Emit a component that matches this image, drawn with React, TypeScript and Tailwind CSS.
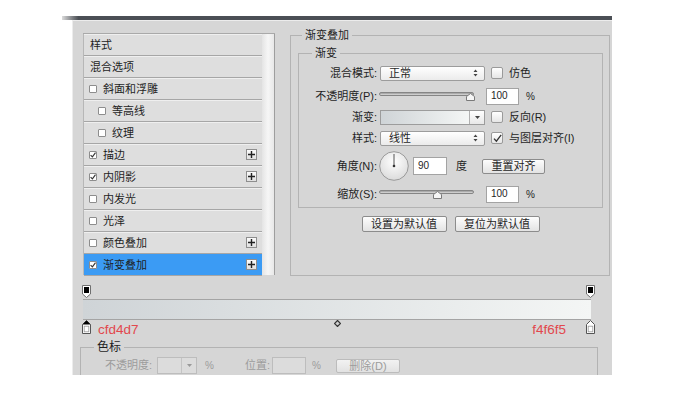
import React from "react";

type Row = {
  label: string;
  cb: boolean | null;
  indent?: boolean;
  plus?: boolean;
  selected?: boolean;
};

const rows: Row[] = [
  { label: "样式", cb: null },
  { label: "混合选项", cb: null },
  { label: "斜面和浮雕", cb: false },
  { label: "等高线", cb: false, indent: true },
  { label: "纹理", cb: false, indent: true },
  { label: "描边", cb: true, plus: true },
  { label: "内阴影", cb: true, plus: true },
  { label: "内发光", cb: false },
  { label: "光泽", cb: false },
  { label: "颜色叠加", cb: false, plus: true },
  { label: "渐变叠加", cb: true, plus: true, selected: true },
];

function SmallCheck({ checked }: { checked: boolean }) {
  return (
    <span className="flex h-[8px] w-[8px] shrink-0 items-center justify-center rounded-[1px] border border-[#8d8d8d] bg-white">
      {checked && (
        <svg width="6" height="6" viewBox="0 0 6 6">
          <path d="M0.6 3.1 L2.4 4.9 L5.5 0.7" fill="none" stroke="#333" strokeWidth="1.1" />
        </svg>
      )}
    </span>
  );
}

function Plus() {
  return (
    <span className="flex h-[11px] w-[11px] items-center justify-center border border-[#8e8e8e] bg-gradient-to-b from-[#fbfbfb] to-[#e0e0e0]">
      <svg width="7" height="7" viewBox="0 0 7 7">
        <path d="M3.5 0 V7 M0 3.5 H7" stroke="#222" strokeWidth="1.4" />
      </svg>
    </span>
  );
}

function Check({ checked, cls }: { checked: boolean; cls: string }) {
  return (
    <span
      className={
        "flex h-[12px] w-[12px] shrink-0 items-center justify-center rounded-[2px] border border-[#9a9a9a] bg-gradient-to-b from-white to-[#e6e6e6] " +
        cls
      }
    >
      {checked && (
        <svg width="9" height="9" viewBox="0 0 9 9">
          <path d="M1 4.6 L3.4 7.2 L8.2 0.8" fill="none" stroke="#333" strokeWidth="1.3" />
        </svg>
      )}
    </span>
  );
}

function UpDown() {
  return (
    <svg width="5" height="8" viewBox="0 0 5 8">
      <path d="M2.5 0.5 L4.5 3 H0.5 Z M2.5 7.5 L4.5 5 H0.5 Z" fill="#444" />
    </svg>
  );
}

function Select({ text }: { text: string }) {
  return (
    <div className="ml-[3px] flex h-[15px] w-[105px] items-center justify-between rounded-[2px] border border-[#9c9c9c] bg-gradient-to-b from-white to-[#ebebeb] pl-[8px] pr-[6px]">
      <span className="leading-[13px]">{text}</span>
      <UpDown />
    </div>
  );
}

function Slider({ pos }: { pos: number }) {
  return (
    <div className="relative ml-[2px] h-[9px] w-[95px]">
      <div className="h-[4px] w-full rounded-full border border-[#858585] bg-gradient-to-b from-[#9a9a9a] to-[#dedede]" />
      <svg className="absolute top-[1px]" style={{ left: pos - 4.5 }} width="9" height="8" viewBox="0 0 9 8">
        <path d="M0.5 7.5 V3.5 L4.5 0.5 L8.5 3.5 V7.5 Z" fill="#f6f6f6" stroke="#7a7a7a" />
      </svg>
    </div>
  );
}

function NumBox({ value, cls }: { value: string; cls: string }) {
  return (
    <div
      className={
        "flex items-center border border-[#a3a3a3] bg-white pl-[4px] text-[10px] leading-[12px] " + cls
      }
    >
      {value}
    </div>
  );
}

function Button({ text, cls }: { text: string; cls: string }) {
  return (
    <div
      className={
        "flex items-center justify-center rounded-[2px] border border-[#8c8c8c] bg-gradient-to-b from-[#fdfdfd] to-[#e3e3e3] leading-[12px] " +
        cls
      }
    >
      {text}
    </div>
  );
}

function TopStop() {
  return (
    <svg width="9" height="13" viewBox="0 0 9 13">
      <path d="M0.5 0.5 H8.5 V9 L4.5 12.5 L0.5 9 Z" fill="#fff" stroke="#6f6f6f" />
      <rect x="2" y="2" width="5" height="6" fill="#000" />
    </svg>
  );
}

function BottomStop({ active }: { active: boolean }) {
  return (
    <svg width="9" height="14" viewBox="0 0 9 14">
      <path d="M4.5 0.5 L8.5 4.5 V13.5 H0.5 V4.5 Z" fill="#fff" stroke="#555" />
      {active && <path d="M4.5 0.5 L8.5 4.5 H0.5 Z" fill="#000" />}
      <rect x="2.2" y="6.2" width="4.6" height="5.6" fill="#fff" stroke="#9a9a9a" strokeWidth="0.8" />
    </svg>
  );
}

export default function App() {
  return (
    <div className="relative h-[396px] w-[690px] overflow-hidden bg-white text-[11px] text-[#1f1f1f] [font-family:'Liberation_Sans','Noto_Sans_CJK_SC',sans-serif]">
      <div className="ml-[62px] mt-[16px] h-[4px] w-[550px] bg-gradient-to-r from-[#dcdcdc] via-[#4b4f55] via-[3%] to-[#4b4f55]" />
      <div className="ml-[72px] flex h-[355px] w-[540px] flex-col overflow-hidden border-l border-t border-[#ececec] bg-[#d6d6d6]">
        {/* upper area */}
        <div className="flex shrink-0 items-start pl-[10px] pt-[7px]">
          {/* style list */}
          <div className="mt-[5px] flex h-[242px] w-[192px] border-t border-[#a9a9a9]">
            <div className="flex w-[179px] flex-col border-l border-[#b7b7b7]">
              {rows.map((r) => (
                <div
                  key={r.label}
                  className={
                    r.selected
                      ? "flex h-[22px] shrink-0 items-center border-b border-[#a6a6a6] bg-[#3b9bf4] pr-[5px]"
                      : "flex h-[22px] shrink-0 items-center border-b border-[#a6a6a6] bg-[#dedede] pr-[5px] shadow-[inset_0_1px_0_#efefef]"
                  }
                >
                  <div
                    className={
                      r.cb === null
                        ? "flex flex-1 items-center gap-[6px] pl-[6px]"
                        : r.indent
                          ? "flex flex-1 items-center gap-[6px] pl-[14px]"
                          : "flex flex-1 items-center gap-[6px] pl-[5px]"
                    }
                  >
                    {r.cb !== null && <SmallCheck checked={r.cb} />}
                    <span className="leading-[14px]">{r.label}</span>
                  </div>
                  {r.plus && <Plus />}
                </div>
              ))}
            </div>
            <div className="h-full w-[13px] border-r border-[#9e9e9e] bg-gradient-to-r from-[#e4e4e4] via-[#f6f6f6] to-[#e8e8e8]" />
          </div>

          {/* right panel */}
          <fieldset className="ml-[15px] h-[248px] w-[320px] border border-[#b3b3b3] p-0">
            <legend className="ml-[11px] px-[3px] leading-[14px]">渐变叠加</legend>
            <div className="flex flex-col pl-[7px] pr-[6px]">
              <fieldset className="mt-[4px] w-[305px] border border-[#b3b3b3] p-0">
                <legend className="ml-[13px] px-[3px] leading-[14px]">渐变</legend>
                <div className="flex flex-col pb-[4px]">
                  <div className="mt-[4px] flex h-[18px] items-center">
                    <span className="w-[78px] text-right">混合模式:</span>
                    <Select text="正常" />
                    <Check checked={false} cls="ml-[6px]" />
                    <span className="ml-[6px]">仿色</span>
                  </div>
                  <div className="mt-[5px] flex h-[18px] items-center">
                    <span className="w-[78px] text-right">不透明度(P):</span>
                    <Slider pos={91} />
                    <NumBox value="100" cls="ml-[12px] h-[17px] w-[33px]" />
                    <span className="ml-[7px] text-[10px]">%</span>
                  </div>
                  <div className="mt-[3px] flex h-[18px] items-center">
                    <span className="w-[78px] text-right">渐变:</span>
                    <div className="ml-[3px] flex h-[15px] w-[105px] border border-[#9c9c9c]">
                      <div className="flex-1 bg-gradient-to-r from-[#cfd4d7] to-[#f4f6f5]" />
                      <div className="flex w-[15px] items-center justify-center border-l border-[#b0b0b0] bg-gradient-to-b from-white to-[#e8e8e8]">
                        <svg width="5" height="3" viewBox="0 0 5 3">
                          <path d="M0 0 H5 L2.5 3 Z" fill="#444" />
                        </svg>
                      </div>
                    </div>
                    <Check checked={false} cls="ml-[6px]" />
                    <span className="ml-[6px]">反向(R)</span>
                  </div>
                  <div className="mt-[3px] flex h-[18px] items-center">
                    <span className="w-[78px] text-right">样式:</span>
                    <Select text="线性" />
                    <Check checked={true} cls="ml-[6px]" />
                    <span className="ml-[6px]">与图层对齐(I)</span>
                  </div>
                  <div className="mt-[4px] flex h-[30px] items-center">
                    <span className="w-[78px] text-right">角度(N):</span>
                    <svg className="ml-[2px]" width="30" height="30" viewBox="0 0 30 30">
                      <defs>
                        <radialGradient id="dialg" cx="50%" cy="35%" r="70%">
                          <stop offset="0%" stopColor="#ffffff" />
                          <stop offset="100%" stopColor="#d8d8d8" />
                        </radialGradient>
                      </defs>
                      <circle cx="15" cy="15" r="14.3" fill="url(#dialg)" stroke="#9a9a9a" />
                      <line x1="15" y1="15" x2="15" y2="3" stroke="#555" strokeWidth="1" />
                      <circle cx="15" cy="15" r="1.3" fill="#333" />
                    </svg>
                    <NumBox value="90" cls="ml-[4px] h-[18px] w-[34px]" />
                    <span className="ml-[9px]">度</span>
                    <Button text="重置对齐" cls="ml-[15px] h-[15px] w-[63px]" />
                  </div>
                  <div className="mt-[4px] flex h-[18px] items-center">
                    <span className="w-[78px] text-right">缩放(S):</span>
                    <Slider pos={58} />
                    <NumBox value="100" cls="ml-[12px] h-[17px] w-[33px]" />
                    <span className="ml-[7px] text-[10px]">%</span>
                  </div>
                </div>
              </fieldset>
              <div className="mt-[8px] flex justify-center gap-[8px]">
                <Button text="设置为默认值" cls="h-[16px] w-[85px]" />
                <Button text="复位为默认值" cls="h-[16px] w-[85px]" />
              </div>
            </div>
          </fieldset>
        </div>

        {/* gradient editor */}
        <div className="ml-[9px] mt-[9px] flex h-[13px] w-[513px] shrink-0 justify-between">
          <TopStop />
          <TopStop />
        </div>
        <div className="ml-[10px] mt-[1px] h-[21px] w-[508px] shrink-0 border-y border-[#a4a4a4] bg-gradient-to-r from-[#cfd4d7] to-[#f4f6f5]" />
        <div className="relative ml-[9px] flex h-[14px] w-[513px] shrink-0 items-start justify-between">
          <div className="flex items-start">
            <BottomStop active={true} />
            <span className="ml-[7px] mt-[2px] text-[13.5px] leading-[16px] text-[#e2484d]">cfd4d7</span>
          </div>
          <svg className="absolute left-[252px] top-[0px]" width="7" height="7" viewBox="0 0 7 7">
            <path d="M3.5 0.5 L6.5 3.5 L3.5 6.5 L0.5 3.5 Z" fill="#cfcfcf" stroke="#333" strokeWidth="1.2" />
          </svg>
          <div className="flex items-start">
            <span className="mr-[20px] mt-[2px] text-[13.5px] leading-[16px] text-[#e2484d]">f4f6f5</span>
            <BottomStop active={false} />
          </div>
        </div>

        <fieldset className="ml-[7px] mt-[6px] h-[60px] w-[518px] shrink-0 border border-[#b3b3b3] p-0">
          <legend className="ml-[13px] px-[3px] text-[12px] leading-[14px]">色标</legend>
          <div className="mt-[3px] flex h-[17px] items-center pl-[24px] text-[#9c9c9c]">
            <span>不透明度:</span>
            <div className="ml-[5px] flex h-[17px] w-[40px] border border-[#bdbdbd] bg-[#dcdcdc]">
              <div className="flex-1" />
              <div className="flex w-[15px] items-center justify-center border-l border-[#c4c4c4]">
                <svg width="5" height="3" viewBox="0 0 5 3">
                  <path d="M0 0 H5 L2.5 3 Z" fill="#999" />
                </svg>
              </div>
            </div>
            <span className="ml-[8px] text-[10px]">%</span>
            <span className="ml-[31px]">位置:</span>
            <div className="ml-[2px] h-[17px] w-[34px] border border-[#bdbdbd] bg-[#dcdcdc]" />
            <span className="ml-[6px] text-[10px]">%</span>
            <div className="ml-[15px] flex h-[14px] w-[64px] items-center justify-center rounded-[2px] border border-[#bcbcbc] bg-gradient-to-b from-[#f2f2f2] to-[#e2e2e2] leading-[12px]">
              删除(D)
            </div>
          </div>
        </fieldset>
      </div>
    </div>
  );
}
